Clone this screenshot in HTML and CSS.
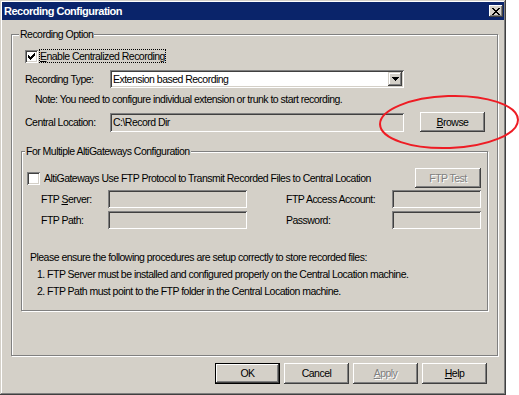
FILE: index.html
```html
<!DOCTYPE html>
<html lang="en">
<head>
    <meta charset="UTF-8">
    <title>Recording Configuration</title>
    <link rel="stylesheet" href="styles.css">
</head>
<body>
    <div class="window">
        <div class="titlebar">
            <span class="title">Recording Configuration</span>
            <span class="close-btn">
                <svg width="8" height="7" viewBox="0 0 8 7" shape-rendering="crispEdges"><path d="M0 0h2v1h-2z M6 0h2v1h-2z M1 1h2v1h-2z M5 1h2v1h-2z M2 2h4v1h-4z M3 3h2v1h-2z M2 4h4v1h-4z M1 5h2v1h-2z M5 5h2v1h-2z M0 6h2v1h-2z M6 6h2v1h-2z" fill="#000"/></svg>
            </span>
        </div>

        <div class="content">
            <fieldset class="group outer">
                <legend>Recording Option</legend>

                <div class="check-row enable">
                    <span class="checkbox">
                        <svg width="7" height="7" viewBox="0 0 7 7" shape-rendering="crispEdges"><path d="M6 0h1v3h-1z M5 1h1v3h-1z M4 2h1v3h-1z M3 3h1v3h-1z M2 4h1v3h-1z M1 3h1v3h-1z M0 2h1v3h-1z" fill="#000"/></svg>
                    </span>
                    <span class="focus"><u>E</u>nable Centralized Recording</span>
                </div>

                <div class="field-row type-row">
                    <span class="label">Recording Type:</span>
                    <div class="combo">
                        <span>Extension based Recording</span>
                        <span class="combo-btn">
                            <svg width="7" height="4" viewBox="0 0 7 4" shape-rendering="crispEdges"><path d="M0 0h7v1h-7z M1 1h5v1h-5z M2 2h3v1h-3z M3 3h1v1h-1z" fill="#000"/></svg>
                        </span>
                    </div>
                </div>

                <div class="note">Note: You need to configure individual extension or trunk to start recording.</div>

                <div class="field-row location-row">
                    <span class="label">Central Location:</span>
                    <div class="field location">C:\Record Dir</div>
                    <button class="btn browse"><u>B</u>rowse</button>
                </div>

                <fieldset class="group inner">
                    <legend>For Multiple AltiGateways Configuration</legend>

                    <div class="check-row ftp-check">
                        <span class="checkbox"></span>
                        <span class="check-label">AltiGateways Use FTP Protocol to Transmit Recorded Files to Central Location</span>
                        <button class="btn disabled ftp-test">FTP Test</button>
                    </div>

                    <div class="ftp-row server-row">
                        <span class="ftp-label">FTP <u>S</u>erver:</span>
                        <div class="field ftp-field"></div>
                        <span class="ftp-label right">FTP Access Account:</span>
                        <div class="field ftp-field small"></div>
                    </div>
                    <div class="ftp-row path-row">
                        <span class="ftp-label">FTP Path:</span>
                        <div class="field ftp-field"></div>
                        <span class="ftp-label right">Password:</span>
                        <div class="field ftp-field small"></div>
                    </div>

                    <p class="info">Please ensure the following procedures are setup correctly to store recorded files:</p>
                    <p class="info step">1. FTP Server must be installed and configured properly on the Central Location machine.</p>
                    <p class="info step">2. FTP Path must point to the FTP folder in the Central Location machine.</p>
                </fieldset>
            </fieldset>

            <div class="buttons">
                <button class="btn default">OK</button>
                <button class="btn">Cancel</button>
                <button class="btn disabled"><u>A</u>pply</button>
                <button class="btn"><u>H</u>elp</button>
            </div>
        </div>
    </div>

    <svg class="highlight" width="143" height="66" viewBox="0 0 143 66">
        <ellipse cx="73" cy="32" rx="69" ry="26" transform="rotate(-2 73 32)" fill="none" stroke="#ee1c24" stroke-width="2"/>
    </svg>
</body>
</html>
```

FILE: styles.css
```css
* {
    margin: 0;
    padding: 0;
    box-sizing: border-box;
}

body {
    background: #fff;
    font-family: "Liberation Sans", Arial, sans-serif;
    font-size: 10.5px;
    letter-spacing: -0.52px;
    line-height: 13px;
    color: #000;
    position: relative;
    width: 519px;
    height: 395px;
    overflow: hidden;
}

u {
    text-decoration: underline;
    text-underline-offset: 1px;
}

.window {
    width: 506px;
    height: 395px;
    padding: 2px;
    background: #d4d0c8;
    box-shadow: inset -1px -1px #404040, inset 1px 1px #d4d0c8, inset -2px -2px #808080, inset 2px 2px #fff;
}

.titlebar {
    height: 18px;
    background: #0a246a;
    display: flex;
    align-items: center;
    justify-content: space-between;
    padding: 0 1px 0 2px;
}

.title {
    color: #fff;
    font-weight: bold;
    font-size: 11px;
    letter-spacing: -0.5px;
}

.close-btn {
    width: 14px;
    height: 12px;
    background: #d4d0c8;
    display: flex;
    align-items: center;
    justify-content: center;
    box-shadow: inset -1px -1px #404040, inset 1px 1px #fff, inset -2px -2px #808080;
}

/* group boxes */
.group {
    border: 1px solid #808080;
    box-shadow: inset 1px 1px #fff, 1px 1px #fff;
    min-width: 0;
}

.group legend {
    padding: 0 1px;
    line-height: 12px;
    background: #d4d0c8;
}

.outer {
    width: 487px;
    margin: 8px 0 0 9px;
    padding: 0 0 44px 0;
}

.outer > legend {
    margin-left: 7px;
}

.inner {
    width: 467px;
    margin: 13px 0 0 9px;
    padding: 0 0 12px 0;
}

.inner > legend {
    margin-left: 3px;
}

/* checkboxes */
.check-row {
    display: flex;
    align-items: center;
}

.checkbox {
    width: 13px;
    height: 13px;
    background: #fff;
    display: flex;
    align-items: center;
    justify-content: center;
    box-shadow: inset 1px 1px #808080, inset -1px -1px #fff, inset 2px 2px #404040, inset -2px -2px #d4d0c8;
}

.enable {
    height: 14px;
    margin: 9px 0 0 13px;
}

.enable .checkbox {
    margin-right: 1px;
}

.focus {
    height: 14px;
    line-height: 14px;
    padding: 0 1px;
    outline: 1px dotted #000;
    outline-offset: -1px;
}

/* field rows */
.field-row {
    display: flex;
    align-items: flex-start;
    margin-left: 13px;
}

.label {
    width: 85px;
    line-height: 18px;
}

.type-row {
    margin-top: 7px;
}

.combo {
    width: 294px;
    height: 18px;
    background: #fff;
    display: flex;
    align-items: center;
    justify-content: space-between;
    padding: 2px 2px 2px 3px;
    box-shadow: inset 1px 1px #808080, inset -1px -1px #fff, inset 2px 2px #404040, inset -2px -2px #d4d0c8;
}

.combo-btn {
    width: 14px;
    height: 14px;
    background: #d4d0c8;
    display: flex;
    align-items: center;
    justify-content: center;
    padding-left: 1px;
    box-shadow: inset -1px -1px #404040, inset 1px 1px #d4d0c8, inset -2px -2px #808080, inset 2px 2px #fff;
}

.note {
    margin: 5px 0 0 23px;
}

.location-row {
    margin-top: 6px;
}

.location-row .label {
    line-height: 20px;
}

.field {
    background: #d4d0c8;
    box-shadow: inset 1px 1px #808080, inset -1px -1px #fff, inset 2px 2px #404040, inset -2px -2px #d4d0c8;
}

.location {
    width: 294px;
    height: 19px;
    margin-top: 1px;
    padding: 3px 3px;
}

/* buttons */
.btn {
    font: inherit;
    letter-spacing: inherit;
    color: #000;
    border: 0;
    width: 65px;
    height: 21px;
    background: #d4d0c8;
    box-shadow: inset -1px -1px #404040, inset 1px 1px #fff, inset -2px -2px #808080, inset 2px 2px #d4d0c8;
}

.btn.default {
    border: 1px solid #000;
}

.btn.disabled {
    color: #808080;
    text-shadow: 1px 1px #fff;
}

.browse {
    height: 20px;
    margin-left: 16px;
}

/* ftp section */
.ftp-check {
    height: 20px;
    margin-top: 11px;
    padding: 0 6px 0 5px;
}

.check-label {
    margin-left: 4px;
}

.ftp-test {
    width: 66px;
    height: 20px;
    margin-left: auto;
}

.ftp-row {
    display: flex;
    align-items: center;
    height: 18px;
    padding-left: 19px;
}

.server-row {
    margin-top: 2px;
}

.path-row {
    margin-top: 3px;
}

.ftp-label {
    width: 67px;
}

.ftp-label.right {
    width: 106px;
    margin-left: 39px;
}

.ftp-field {
    width: 139px;
    height: 18px;
}

.ftp-field.small {
    width: 89px;
}

.info {
    margin: 22px 0 0 8px;
}

.info.step {
    margin: 4px 0 0 15px;
}

.buttons {
    display: flex;
    justify-content: flex-end;
    gap: 4px;
    margin-top: 7px;
    padding-right: 17px;
}

.highlight {
    position: absolute;
    left: 376px;
    top: 90px;
}
```
